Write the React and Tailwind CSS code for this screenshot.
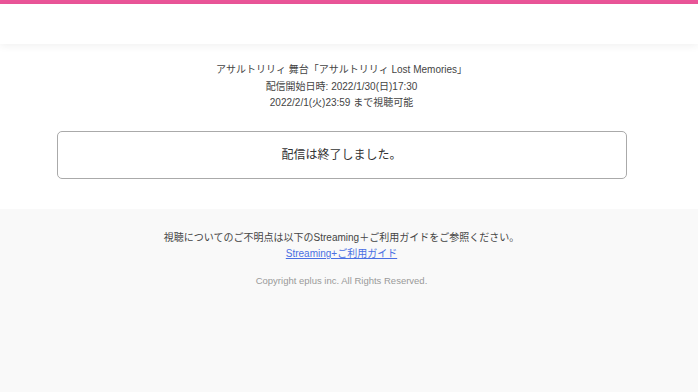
export default function App() {
  const font = { fontFamily: '"Liberation Sans", "Noto Sans CJK JP", sans-serif' };
  return (
    <div className="min-h-[392px] flex flex-col bg-[#f9f9f9]" style={font}>
      <div className="h-[4px] bg-[#eb5599]" />
      <div className="relative h-[40px] bg-white shadow-[0_2px_8px_rgba(0,0,0,0.06)] z-10" />
      <main className="bg-white pt-[18px] pb-[30px] pr-[15px] flex flex-col items-center">
        <div className="text-[10px] leading-[16.5px] text-[#444] text-center">
          <p>アサルトリリィ 舞台「アサルトリリィ Lost Memories」</p>
          <p>配信開始日時: 2022/1/30(日)17:30</p>
          <p>2022/2/1(火)23:59 まで視聴可能</p>
        </div>
        <div className="mt-[19px] w-[570px] h-[48px] border border-[#aaa] rounded-[5px] flex items-center justify-center text-[12px] text-[#333]">
          配信は終了しました。
        </div>
      </main>
      <footer className="flex-1 bg-[#f9f9f9] pt-[21px] pr-[15px] flex flex-col items-center text-[10px] leading-[16px]">
        <p className="text-[#444]">視聴についてのご不明点は以下のStreaming＋ご利用ガイドをご参照ください。</p>
        <a href="#" className="text-[#4a6fe3] underline">Streaming+ご利用ガイド</a>
        <p className="mt-[11px] text-[9.5px] text-[#999]">Copyright eplus inc. All Rights Reserved.</p>
      </footer>
    </div>
  );
}
